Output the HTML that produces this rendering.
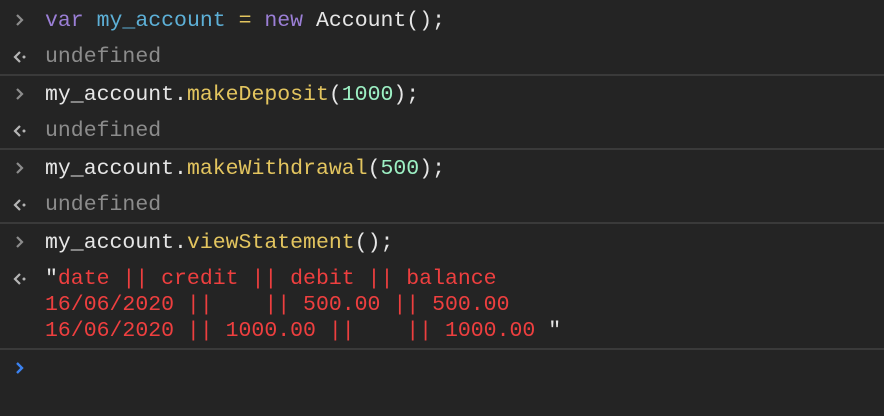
<!DOCTYPE html>
<html><head><meta charset="utf-8"><style>
html,body{margin:0;padding:0;background:#242424;width:884px;height:416px;overflow:hidden}
.l{position:absolute;left:45px;font-family:"Liberation Mono",monospace;font-size:21.5px;line-height:26px;white-space:pre;color:#e6e6e6}
.sep{position:absolute;left:0;width:884px;height:2px;background:#3a3a3a}
.g{color:#8c8c8c}.p{color:#9b7fd6}.b{color:#5db0d7}.y{color:#e3c55f}.n{color:#9df0c4}.r{color:#ee3f3f}.w{color:#e6e6e6}
svg{position:absolute;left:11px}
</style></head><body>
<div class="sep" style="top:74px"></div>
<div class="sep" style="top:148px"></div>
<div class="sep" style="top:222px"></div>
<div class="sep" style="top:348px"></div>

<svg style="top:12px" width="16" height="16"><path d="M6 3 L11 8 L6 13" stroke="#8c8c8c" stroke-width="2.2" fill="none"/></svg>
<svg style="top:49px" width="18" height="16"><path d="M9 3 L4 8 L9 13" stroke="#b5b5b5" stroke-width="2.2" fill="none"/><circle cx="13" cy="8" r="1.5" fill="#b5b5b5"/></svg>
<svg style="top:86px" width="16" height="16"><path d="M6 3 L11 8 L6 13" stroke="#8c8c8c" stroke-width="2.2" fill="none"/></svg>
<svg style="top:123px" width="18" height="16"><path d="M9 3 L4 8 L9 13" stroke="#b5b5b5" stroke-width="2.2" fill="none"/><circle cx="13" cy="8" r="1.5" fill="#b5b5b5"/></svg>
<svg style="top:160px" width="16" height="16"><path d="M6 3 L11 8 L6 13" stroke="#8c8c8c" stroke-width="2.2" fill="none"/></svg>
<svg style="top:197px" width="18" height="16"><path d="M9 3 L4 8 L9 13" stroke="#b5b5b5" stroke-width="2.2" fill="none"/><circle cx="13" cy="8" r="1.5" fill="#b5b5b5"/></svg>
<svg style="top:234px" width="16" height="16"><path d="M6 3 L11 8 L6 13" stroke="#8c8c8c" stroke-width="2.2" fill="none"/></svg>
<svg style="top:271px" width="18" height="16"><path d="M9 3 L4 8 L9 13" stroke="#b5b5b5" stroke-width="2.2" fill="none"/><circle cx="13" cy="8" r="1.5" fill="#b5b5b5"/></svg>
<svg style="top:360px" width="16" height="16"><path d="M6 3 L11 8 L6 13" stroke="#3b82f0" stroke-width="2.4" fill="none"/></svg>

<div class="l" style="top:8px"><span class="p">var</span> <span class="b">my_account</span> <span class="y">=</span> <span class="p">new</span> Account();</div>
<div class="l g" style="top:44px">undefined</div>
<div class="l" style="top:82px">my_account.<span class="y">makeDeposit</span>(<span class="n">1000</span>);</div>
<div class="l g" style="top:118px">undefined</div>
<div class="l" style="top:156px">my_account.<span class="y">makeWithdrawal</span>(<span class="n">500</span>);</div>
<div class="l g" style="top:192px">undefined</div>
<div class="l" style="top:230px">my_account.<span class="y">viewStatement</span>();</div>
<div class="l r" style="top:266px"><span class="w">"</span>date || credit || debit || balance</div>
<div class="l r" style="top:292px">16/06/2020 ||    || 500.00 || 500.00</div>
<div class="l r" style="top:318px">16/06/2020 || 1000.00 ||    || 1000.00 <span class="w">"</span></div>
</body></html>
